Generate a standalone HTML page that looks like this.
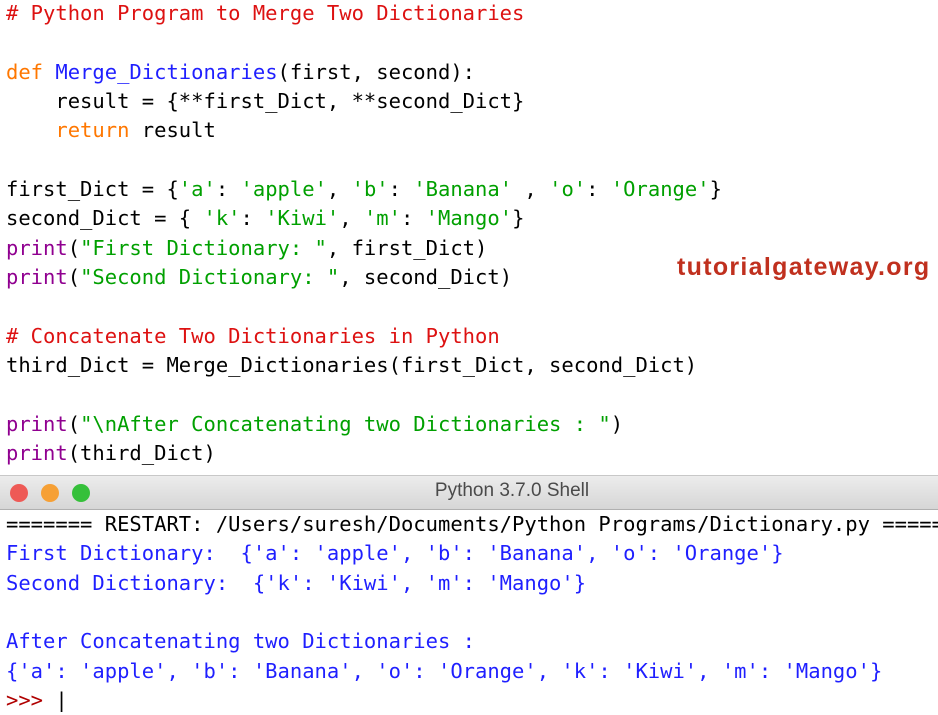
<!DOCTYPE html>
<html><head><meta charset="utf-8"><style>
body{margin:0;width:938px;height:705px;overflow:hidden;background:#fff;position:relative;font-family:"DejaVu Sans Mono","Liberation Mono",monospace;}
.code{position:absolute;left:6px;top:-1px;font-size:20.5px;line-height:29.35px;white-space:pre;color:#000;}
.c{color:#dd1111}.k{color:#ff7700}.f{color:#1f1fff}.s{color:#00a000}.b{color:#900090}
.wm{position:absolute;left:677px;top:253px;font-family:"Liberation Sans",sans-serif;font-weight:bold;font-size:25px;color:#c0301e;letter-spacing:1.3px}
.bar{position:absolute;left:0;top:475px;width:938px;height:33px;background:linear-gradient(#ececec,#d6d6d6);border-top:1px solid #c8c8c8;border-bottom:1px solid #b0b0b0;}
.dot{position:absolute;top:8px;width:18px;height:18px;border-radius:50%}
.title{position:absolute;left:0;width:1024px;top:4px;text-align:center;font-family:"Liberation Sans",sans-serif;font-size:19px;color:#4a4a4a}
.shell{position:absolute;left:6px;top:510px;font-size:20.5px;line-height:29.35px;white-space:pre;color:#000}
.o{color:#1f1fff}.p{color:#b00000}
</style></head><body>
<div class="code"><span class="c"># Python Program to Merge Two Dictionaries</span>

<span class="k">def</span> <span class="f">Merge_Dictionaries</span>(first, second):
    result = {**first_Dict, **second_Dict}
    <span class="k">return</span> result

first_Dict = {<span class="s">'a'</span>: <span class="s">'apple'</span>, <span class="s">'b'</span>: <span class="s">'Banana'</span> , <span class="s">'o'</span>: <span class="s">'Orange'</span>}
second_Dict = { <span class="s">'k'</span>: <span class="s">'Kiwi'</span>, <span class="s">'m'</span>: <span class="s">'Mango'</span>}
<span class="b">print</span>(<span class="s">"First Dictionary: "</span>, first_Dict)
<span class="b">print</span>(<span class="s">"Second Dictionary: "</span>, second_Dict)

<span class="c"># Concatenate Two Dictionaries in Python</span>
third_Dict = Merge_Dictionaries(first_Dict, second_Dict)

<span class="b">print</span>(<span class="s">"\nAfter Concatenating two Dictionaries : "</span>)
<span class="b">print</span>(third_Dict)</div>
<div class="wm">tutorialgateway.org</div>
<div class="bar">
<div class="dot" style="left:10px;background:#ee5a56"></div>
<div class="dot" style="left:41px;background:#f6a035"></div>
<div class="dot" style="left:72px;background:#35c03a"></div>
<div class="title">Python 3.7.0 Shell</div>
</div>
<div class="shell">======= RESTART: /Users/suresh/Documents/Python Programs/Dictionary.py =====
<span class="o">First Dictionary:  {'a': 'apple', 'b': 'Banana', 'o': 'Orange'}</span>
<span class="o">Second Dictionary:  {'k': 'Kiwi', 'm': 'Mango'}</span>

<span class="o">After Concatenating two Dictionaries :</span>
<span class="o">{'a': 'apple', 'b': 'Banana', 'o': 'Orange', 'k': 'Kiwi', 'm': 'Mango'}</span>
<span class="p">&gt;&gt;&gt;</span> |</div>
</body></html>
